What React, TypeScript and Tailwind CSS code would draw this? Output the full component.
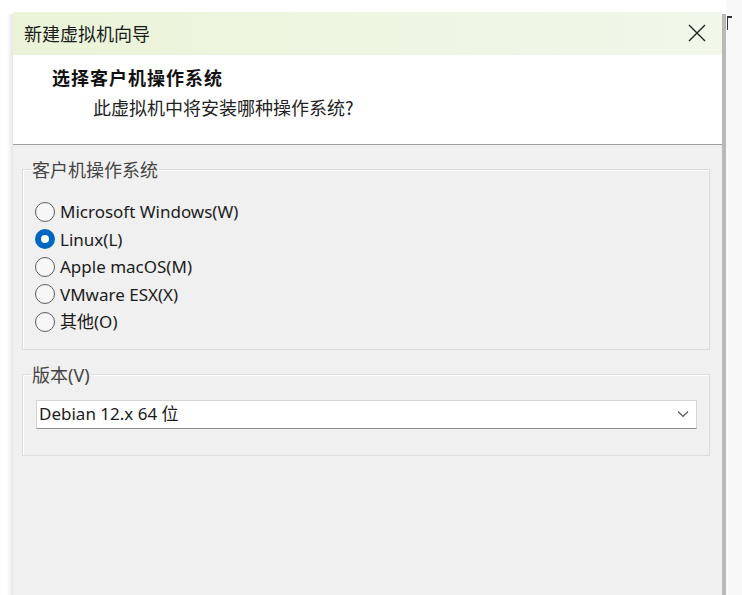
import React, { useState } from "react";

const osOptions = [
  { id: "windows", label: "Microsoft Windows(W)" },
  { id: "linux", label: "Linux(L)" },
  { id: "macos", label: "Apple macOS(M)" },
  { id: "esx", label: "VMware ESX(X)" },
  { id: "other", label: "其他(O)" },
];

const uiFont = "font-['Noto_Sans','Noto_Sans_CJK_SC',sans-serif]";
const cjkFont = "font-['Noto_Sans_CJK_SC',sans-serif]";

const Radio: React.FC<{ checked: boolean; label: string; onSelect: () => void }> = ({
  checked,
  label,
  onSelect,
}) => (
  <label className="flex items-center h-[27.5px] cursor-default" onClick={onSelect}>
    {checked ? (
      <span className="w-[20px] h-[20px] rounded-full bg-[#0067c0] flex items-center justify-center">
        <span className="w-[8px] h-[8px] rounded-full bg-white" />
      </span>
    ) : (
      <span className="w-[20px] h-[20px] rounded-full border border-[#5c5c5c] bg-[#f7f7f7]" />
    )}
    <span className={`ml-[5px] text-[17px] text-[#1b1b1b] ${uiFont}`}>{label}</span>
  </label>
);

export default function App() {
  const [os, setOs] = useState("linux");

  return (
    <div className="w-[742px] h-[595px] overflow-hidden bg-white flex">
      {/* soft shadow left of the dialog */}
      <div className="w-[13px] flex justify-end pt-[14px]">
        <div className="w-[6px] h-full bg-gradient-to-r from-white to-[#e6e6e6]" />
      </div>

      <div className="mt-[12px] w-[709px] flex flex-col">
        {/* title bar */}
        <div className="h-[43px] flex items-center justify-between pl-[11px] pr-[16px] bg-gradient-to-r from-[#ebf4d8] to-[#eff8ea]">
          <span className={`text-[18px] text-[#1a1a1a] ${cjkFont}`}>新建虚拟机向导</span>
          <svg width="18" height="18" viewBox="0 0 18 18" className="mb-[1px]">
            <path d="M1 1 L17 17 M17 1 L1 17" stroke="#222" strokeWidth="1.4" fill="none" />
          </svg>
        </div>

        {/* wizard page header */}
        <div className="h-[90px] bg-white border-b border-[#a0a0a0] pl-[39px] pt-[9px]">
          <div className={`text-[18px] font-bold tracking-[1px] text-[#111] ${cjkFont}`}>选择客户机操作系统</div>
          <div className={`ml-[41px] mt-[3px] text-[18px] text-[#222] ${cjkFont}`}>此虚拟机中将安装哪种操作系统?</div>
        </div>

        {/* page body */}
        <div className="flex-1 bg-[#f0f0f0] pl-[9px] pr-[12px] pt-[12px]">
          <fieldset className="border border-[#dcdcdc] px-[9px] pb-[13px] shadow-[inset_1px_1px_0_#ffffff]">
            <legend className={`-ml-[1px] px-[1px] text-[18px] leading-[24px] text-[#444] ${cjkFont}`}>客户机操作系统</legend>
            <div className="mt-[17px] ml-[3px] flex flex-col">
              {osOptions.map((o) => (
                <Radio key={o.id} checked={os === o.id} label={o.label} onSelect={() => setOs(o.id)} />
              ))}
            </div>
          </fieldset>

          <fieldset className="mt-[13px] border border-[#dcdcdc] px-[9px] pb-[26px] shadow-[inset_1px_1px_0_#ffffff]">
            <legend className={`-ml-[1px] px-[1px] text-[18px] leading-[24px] text-[#444] ${uiFont}`}>版本(V)</legend>
            <div className="mt-[13px] ml-[4px] mr-[3px] h-[29px] bg-white border border-[#d4d4d4] border-b-[#8f8f8f] flex items-center justify-between pl-[2px] pr-[7px]">
              <span className={`text-[17px] text-[#1b1b1b] ${uiFont}`}>Debian 12.x 64 位</span>
              <svg width="12" height="8" viewBox="0 0 12 8">
                <path d="M1 1.5 L6 6.5 L11 1.5" stroke="#555" strokeWidth="1.2" fill="none" />
              </svg>
            </div>
          </fieldset>
        </div>
      </div>

      {/* window edge and the window behind it */}
      <div className="mt-[14px] w-[4px] bg-[#b9b9b9]" />
      <div className="flex-1 bg-[#f8f8f8] pt-[16px] pl-[1px]">
        <div className="w-[5px] h-[14px] border-t-2 border-l border-[#333]" />
      </div>
    </div>
  );
}
